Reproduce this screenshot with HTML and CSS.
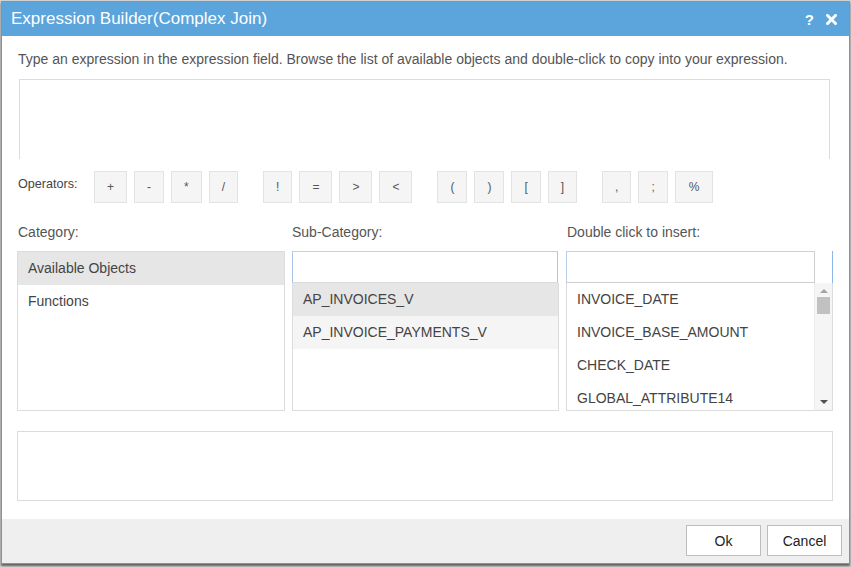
FILE: index.html
```html
<!DOCTYPE html>
<html>
<head>
<meta charset="utf-8">
<link rel="stylesheet" href="styles.css">
</head>
<body>
<div class="dialog">
  <div class="titlebar">
    <span class="title">Expression Builder(Complex Join)</span>
    <span class="title-tools">
      <span class="help">?</span>
      <svg class="close" width="11" height="11" viewBox="0 0 11 11"><path d="M1.5 1.5 L9.5 9.5 M9.5 1.5 L1.5 9.5" stroke="#fff" stroke-width="3" stroke-linecap="square"/></svg>
    </span>
  </div>
  <div class="content">
    <p class="desc">Type an expression in the expression field. Browse the list of available objects and double-click to copy into your expression.</p>
    <div class="expr"></div>
    <div class="ops">
      <span class="ops-label">Operators:</span>
      <div class="op-group">
        <span class="op">+</span><span class="op">-</span><span class="op">*</span><span class="op">/</span>
      </div>
      <div class="op-group">
        <span class="op">!</span><span class="op">=</span><span class="op">&gt;</span><span class="op">&lt;</span>
      </div>
      <div class="op-group">
        <span class="op">(</span><span class="op">)</span><span class="op">[</span><span class="op">]</span>
      </div>
      <div class="op-group">
        <span class="op">,</span><span class="op">;</span><span class="op op-pct">%</span>
      </div>
    </div>
    <div class="columns">
      <div class="col">
        <div class="col-label">Category:</div>
        <div class="box">
          <div class="item sel">Available Objects</div>
          <div class="item">Functions</div>
        </div>
      </div>
      <div class="col">
        <div class="col-label">Sub-Category:</div>
        <div class="picker">
          <div class="search search-sub"></div>
          <div class="list">
            <div class="item sel">AP_INVOICES_V</div>
            <div class="item hover">AP_INVOICE_PAYMENTS_V</div>
          </div>
        </div>
      </div>
      <div class="col">
        <div class="col-label">Double click to insert:</div>
        <div class="picker">
          <div class="search-row">
            <div class="search search-ins"></div>
            <div class="search-gap"></div>
          </div>
          <div class="list list-scroll">
            <div class="items">
              <div class="item">INVOICE_DATE</div>
              <div class="item">INVOICE_BASE_AMOUNT</div>
              <div class="item">CHECK_DATE</div>
              <div class="item">GLOBAL_ATTRIBUTE14</div>
            </div>
            <div class="scrollbar">
              <span class="arrow-up"></span>
              <span class="thumb"></span>
              <span class="arrow-down"></span>
            </div>
          </div>
        </div>
      </div>
    </div>
    <div class="result"></div>
  </div>
  <div class="footer">
    <button class="btn">Ok</button>
    <button class="btn">Cancel</button>
  </div>
</div>
</body>
</html>
```
FILE: styles.css
```css
html, body {
  margin: 0;
  padding: 0;
}
body {
  background: #d2d2d2;
  width: 851px;
  height: 567px;
  overflow: hidden;
  font-family: "Liberation Sans", Arial, sans-serif;
}
.dialog {
  box-sizing: border-box;
  margin: 1px 0 0 1px;
  width: 849px;
  height: 563px;
  border: 1px solid #5a9fd8;
  background: #fff;
  display: flex;
  flex-direction: column;
  box-shadow: 0 2px 2px rgba(0, 0, 0, 0.55);
}
.titlebar {
  height: 34px;
  background: #5ba4dc;
  display: flex;
  align-items: center;
  justify-content: space-between;
  padding: 0 12px 0 9px;
  color: #fff;
}
.title {
  font-size: 17px;
  line-height: 34px;
}
.title-tools {
  display: flex;
  align-items: center;
  gap: 12px;
}
.help {
  font-size: 15px;
  font-weight: bold;
  line-height: 15px;
}
.close {
  display: block;
}
.content {
  padding: 0 16px 0 15px;
}
.desc {
  margin: 15px 0 12px 1px;
  font-size: 14px;
  line-height: 16px;
  color: #555;
}
.expr {
  margin: 0 3px 0 2px;
  height: 80px;
  border: 1px solid #dcdcdc;
  border-bottom: none;
  box-sizing: border-box;
}
.ops {
  margin-top: 12px;
  display: flex;
  align-items: flex-start;
}
.ops-label {
  width: 77px;
  margin-top: 6px;
  padding-left: 1px;
  box-sizing: border-box;
  font-size: 12.6px;
  line-height: 14px;
  color: #444;
}
.op-group {
  display: flex;
  gap: 7px;
  margin-right: 25px;
}
.op {
  box-sizing: border-box;
  height: 32px;
  min-width: 29px;
  padding: 0 12px;
  border: 1px solid #e3e3e3;
  background: #f5f5f5;
  font-size: 12px;
  line-height: 30px;
  color: #555;
  text-align: center;
}
.op-pct {
  padding: 0 13px;
}
.columns {
  margin-top: 21px;
  display: grid;
  grid-template-columns: 268px 267px 267px;
  column-gap: 7px;
}
.col-label {
  font-size: 14px;
  line-height: 16px;
  color: #555;
  margin: 0 0 11px 1px;
}
.col:nth-child(2) .col-label {
  margin-left: 0;
}
.box {
  box-sizing: border-box;
  height: 160px;
  border: 1px solid #dcdcdc;
}
.item {
  height: 33px;
  line-height: 33px;
  padding-left: 10px;
  font-size: 14px;
  color: #444;
  white-space: nowrap;
}
.item.sel {
  background: #e6e6e6;
}
.item.hover {
  background: #f5f5f5;
}
.picker {
  height: 160px;
  display: flex;
  flex-direction: column;
}
.search {
  box-sizing: border-box;
  height: 32px;
  border: 1px solid #cfcfcf;
  background: #fff;
}
.search-sub {
  border-left-color: #a9c6ea;
  border-right-color: #a9c6ea;
  border-bottom-color: #dcdcdc;
  margin-right: 1px;
}
.search-row {
  display: flex;
  height: 32px;
}
.search-ins {
  flex: 1;
  border-left-color: #b8cde8;
}
.search-gap {
  width: 18px;
  box-sizing: border-box;
  border-right: 1px solid #8ab6ea;
}
.list {
  flex: 1;
  box-sizing: border-box;
  border: 1px solid #dcdcdc;
  border-top: none;
  overflow: hidden;
}
.list-scroll {
  display: flex;
}
.items {
  flex: 1;
  overflow: hidden;
}
.scrollbar {
  width: 17px;
  background: #f5f5f5;
  border-left: 1px solid #ececec;
  display: flex;
  flex-direction: column;
  align-items: center;
}
.arrow-up {
  margin-top: 6px;
  width: 0;
  height: 0;
  border-left: 4px solid transparent;
  border-right: 4px solid transparent;
  border-bottom: 4px solid #a3a3a3;
}
.thumb {
  margin-top: 4px;
  width: 13px;
  height: 17px;
  background: #c1c1c1;
}
.arrow-down {
  margin-top: auto;
  margin-bottom: 6px;
  width: 0;
  height: 0;
  border-left: 4px solid transparent;
  border-right: 4px solid transparent;
  border-top: 4px solid #505050;
}
.result {
  margin-top: 20px;
  height: 70px;
  box-sizing: border-box;
  border: 1px solid #dcdcdc;
}
.footer {
  margin-top: auto;
  height: 44px;
  background: #efefef;
  display: flex;
  justify-content: flex-end;
  align-items: flex-start;
  gap: 6px;
  padding: 6px 7px 0 0;
  box-sizing: border-box;
}
.btn {
  width: 75px;
  height: 31px;
  border: 1px solid #bdbdbd;
  background: #fff;
  font-family: "Liberation Sans", Arial, sans-serif;
  font-size: 14px;
  color: #222;
  padding: 0;
}
```
